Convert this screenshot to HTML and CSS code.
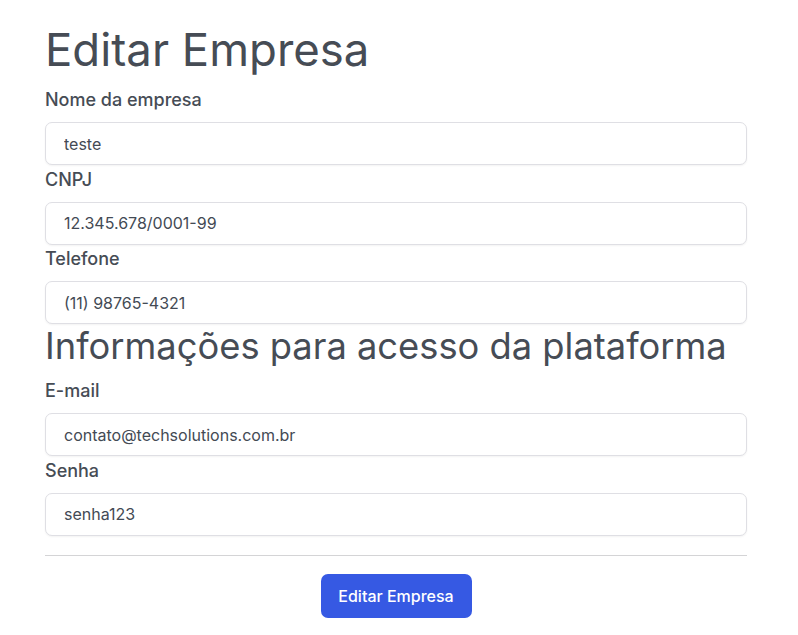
FILE: index.html
```html
<!DOCTYPE html>
<html lang="pt-BR">
<head>
<meta charset="utf-8">
<title>Editar Empresa</title>
<link rel="stylesheet" href="styles.css">
</head>
<body>
<main class="page">
  <h1 class="title">Editar Empresa</h1>
  <form class="form">
    <label class="field">
      <span class="label">Nome da empresa</span>
      <input class="input" type="text" value="teste">
    </label>
    <label class="field">
      <span class="label">CNPJ</span>
      <input class="input" type="text" value="12.345.678/0001-99">
    </label>
    <label class="field">
      <span class="label">Telefone</span>
      <input class="input" type="text" value="(11) 98765-4321">
    </label>
    <h2 class="subtitle">Informações para acesso da plataforma</h2>
    <label class="field">
      <span class="label">E-mail</span>
      <input class="input" type="text" value="contato@techsolutions.com.br">
    </label>
    <label class="field">
      <span class="label">Senha</span>
      <input class="input" type="text" value="senha123">
    </label>
    <hr class="divider">
    <div class="actions">
      <button class="btn" type="button">Editar Empresa</button>
    </div>
  </form>
</main>
</body>
</html>
```
FILE: styles.css
```css
* { box-sizing: border-box; }
html, body { margin: 0; padding: 0; background: #fff; }
body {
  font-family: Inter, "Noto Sans", sans-serif;
  color: #434a54;
}
.page {
  width: 702px;
  margin-left: 45px;
  padding-top: 21px;
}
.title {
  margin: 0 0 9px;
  font-size: 45.5px;
  line-height: 58px;
  font-weight: 400;
  color: #464c55;
}
.form { display: flex; flex-direction: column; }
.field { display: flex; flex-direction: column; gap: 10px; margin-bottom: 2.5px; }
.label {
  font-size: 18px;
  line-height: 24px;
  font-weight: 500;
  color: #464c55;
}
.input {
  height: 43px;
  width: 100%;
  border: 1px solid #dfdfe4;
  border-radius: 7px;
  padding: 0 18px;
  font-family: inherit;
  font-size: 16px;
  color: #434a54;
  background: #fff;
  box-shadow: 0 1px 2px rgba(0,0,0,0.05);
  outline: none;
}
.subtitle {
  margin: -2.5px 0 11px;
  font-size: 36.3px;
  line-height: 44px;
  font-weight: 400;
  color: #464c55;
}
.divider {
  margin: 16.5px 0 18px;
  border: 0;
  border-top: 1px solid #d4d4d6;
}
.actions { display: flex; justify-content: center; }
.btn {
  width: 151px;
  height: 44px;
  border: 0;
  border-radius: 7px;
  background: #3659e3;
  color: #fff;
  font-family: inherit;
  font-size: 16px;
  font-weight: 500;
}
```
